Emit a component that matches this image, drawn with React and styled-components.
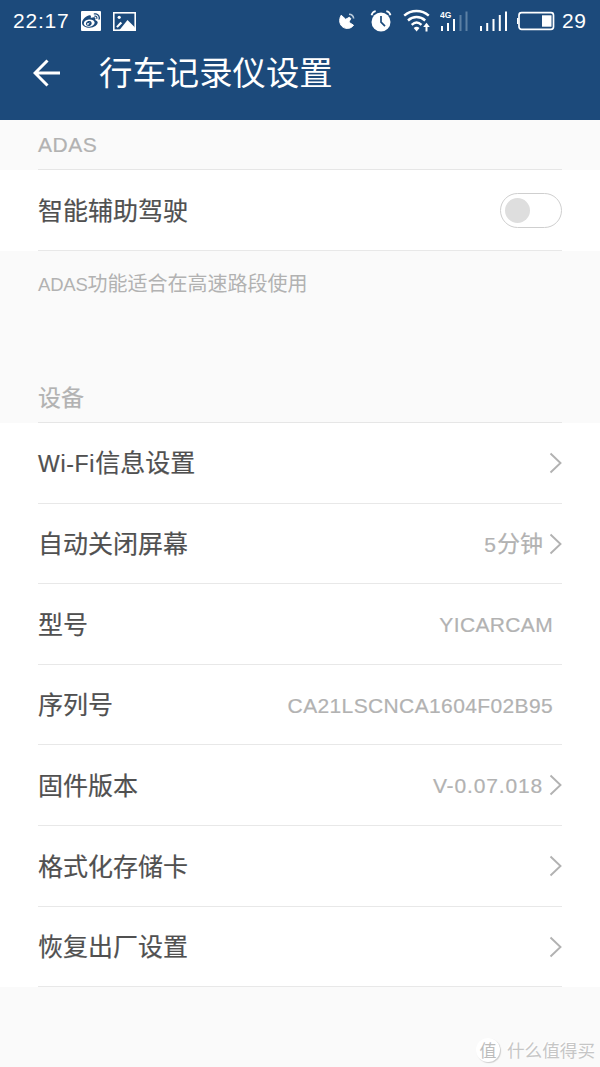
import React from 'react';
import styled, { createGlobalStyle } from 'styled-components'
import { FaWeibo } from 'react-icons/fa'

const rows = [
  { label: '信息设置', prefix: 'Wi-Fi', height: 81, arrow: true },
  { label: '自动关闭屏幕', number: '5', unit: '分钟', height: 80, arrow: true },
  { label: '型号', code: 'YICARCAM', spacing: 0.35, height: 81 },
  { label: '序列号', code: 'CA21LSCNCA1604F02B95', spacing: 0.37, height: 80 },
  { label: '固件版本', code: 'V-0.07.018', spacing: 0.85, height: 81, arrow: true },
  { label: '格式化存储卡', height: 81, arrow: true },
  { label: '恢复出厂设置', height: 80, arrow: true },
]

const StatusIcons = () => (
  <Tray>
    <svg width="20" height="20" viewBox="0 0 20 20" fill="none">
      <path d="M3.2 4.2C.6 8.500 1.500 14 5.200 16.300c3.300 2 8 1.400 10.300-2.100l-4.700-3 2-3.700-1.500-1.200-3.600 2z" fill="#fff" stroke="#fff" strokeWidth="1" strokeLinejoin="round" />
      <path d="M11 3.300c2.600.1 4.300 1.600 4.700 4.200" stroke="#b9cbdc" strokeWidth="1.600" />
    </svg>
    <svg width="22" height="22" viewBox="0 0 22 22" fill="none">
      <circle cx="11" cy="12" r="9.500" fill="#fff" />
      <path d="M1.500 5.200C2.100 3 3.500 1.600 5.700 1.200M16.300 1.200c2.200.4 3.600 1.800 4.200 4" stroke="#fff" strokeWidth="1.800" />
      <path d="M11 6v6.200l4 4" stroke="#1c4a7b" strokeWidth="1.700" />
    </svg>
    <svg width="28" height="24" viewBox="0 0 28 24" fill="none" stroke="#fff">
      <path d="M1.200 6.700c7-6.300 17.600-6.300 24.600 0M5 11.500c5-4.600 12.200-4.600 17.200 0M8.700 15.800c3.100-2.800 6.700-2.800 9.800 0" strokeWidth="2.400" />
      <path d="M10.700 19c1.800-1.700 4-1.700 5.800 0l-2.900 3.500z" fill="#fff" stroke="none" />
      <path d="M23.500 22.500v-6" strokeWidth="2" />
      <path d="M20.200 18l3.300-4.200 3.300 4.200z" fill="#fff" stroke="none" />
    </svg>
    <svg width="30" height="24" viewBox="0 0 30 24">
      <text x="0" y="8.500" fill="#fff" fontFamily="Liberation Sans" fontWeight="bold" fontSize="8.500">4G</text>
      <path d="M1 22v-5h2v5zM7 22v-8h2v8zM13 22V10h2v12z" fill="#fff" />
      <path d="M19.500 22V6h2v16zM25.500 22V2.500h2V22z" fill="#5c80a4" />
    </svg>
    <svg width="28" height="24" viewBox="0 0 28 24">
      <path d="M0 22v-5h2v5zM6.200 22v-8h2v8zM12.500 22V10h2v12zM18.800 22V6h2v16zM25 22V2.500h2V22z" fill="#fff" />
    </svg>
    <svg width="38" height="20" viewBox="0 0 38 20" fill="none">
      <rect x="2" y="1.700" width="34.500" height="16.600" rx="2.500" stroke="#fff" strokeWidth="1.700" />
      <rect x="25" y="4.300" width="9.500" height="11.400" fill="#fff" />
      <path d="M.7 7v6" stroke="#fff" strokeWidth="1.400" />
    </svg>
  </Tray>
)

const Picture = () => (
  <svg width="23" height="19" viewBox="0 0 23 19">
    <rect x=".8" y=".8" width="21.400" height="17.400" fill="none" stroke="#fff" strokeWidth="1.600" />
    <circle cx="6.200" cy="5.300" r="1.600" fill="#fff" />
    <path d="M3.200 14.500l4.300-4.800 1.700 1.500-4.500 4.600z" fill="#fff" />
    <path d="M6.500 18l8-10 7.500 7.500V18z" fill="#fff" />
  </svg>
)

const Arrow = () => (
  <Chevron width="14" height="22" viewBox="0 0 14 22">
    <path d="M2.500 1.500l10 9.500-10 9.500" fill="none" stroke="#b2b2b2" strokeWidth="1.900" />
  </Chevron>
)

const App = () => {
  return (
    <Page>
      <GlobalStyle />
      <Header>
        <StatusBar>
          <Time>22:17</Time>
          <Weibo><FaWeibo size={18} /></Weibo>
          <Picture />
          <StatusIcons />
          <Battery>29</Battery>
        </StatusBar>
        <TitleBar>
          <svg width="28" height="28" viewBox="0 0 28 28" fill="none" stroke="#fff" strokeWidth="3">
            <path d="M14.500 1.500L2 14l12.500 12.500M2 14h25" />
          </svg>
          <Title>行车记录仪设置</Title>
        </TitleBar>
      </Header>

      <SectionTitle $height={50}><Latin $size={21} $spacing={0.5}>ADAS</Latin></SectionTitle>
      <List>
        <Row $height={81}>
          <Label>智能辅助驾驶</Label>
          <Switch><Knob /></Switch>
        </Row>
      </List>
      <Hint><Latin $size={18.5} $spacing={-0.2}>ADAS</Latin>功能适合在高速路段使用</Hint>

      <SectionTitle $height={51} $lift={3}>设备</SectionTitle>
      <List>
        {rows.map((row) => (
          <Row key={row.label} $height={row.height}>
            <Label $lift={row.prefix ? 1 : 3}>
              {row.prefix && <Latin $size={23} $spacing={0.7}>{row.prefix}</Latin>}
              {row.label}
            </Label>
            <Value $plain={!row.arrow}>
              {row.code && <Latin $size={21} $spacing={row.spacing}>{row.code}</Latin>}
              {row.number && <Latin $size={21} $spacing={1}>{row.number}</Latin>}
              {row.unit}
            </Value>
            {row.arrow && <Arrow />}
          </Row>
        ))}
      </List>
      <Footer>
        <Mark>值</Mark>
        <Brand>什么值得买</Brand>
      </Footer>
    </Page>
  );
};

const GlobalStyle = createGlobalStyle`
body{
  margin:0;
}
*{
  box-sizing:border-box;
}
`

const Page = styled.div`
display:flex;
flex-direction:column;
width:600px;
height:1067px;
overflow:hidden;
background-color:#fafafa;
font-family:"Noto Sans CJK SC", sans-serif;
`

const Header = styled.div`
height:120px;
background-color:#1c4a7b;
color:#fff;
`

const StatusBar = styled.div`
display:flex;
align-items:center;
height:42px;
padding-left:13px;
`

const Time = styled.div`
width:68px;
font-family:"Liberation Sans", sans-serif;
font-size:21px;
letter-spacing:0.8px;
`

const Weibo = styled.div`
display:flex;
align-items:center;
justify-content:center;
width:20px;
height:20px;
margin-right:12px;
border-radius:1px;
background-color:#fff;
color:#1c4a7b;
`

const Tray = styled.div`
display:flex;
align-items:center;
gap:10px;
margin-left:202px;

svg{
  flex:none;
}

svg:nth-child(2){
  margin-left:2px;
}

svg:nth-child(3){
  margin-left:1px;
}

svg:nth-child(4){
  margin-left:-1px;
}

svg:nth-child(6){
  margin-left:-1px;
}
`

const Battery = styled.div`
margin-left:7px;
font-family:"Liberation Sans", sans-serif;
font-size:21px;
letter-spacing:0.5px;
`

const TitleBar = styled.div`
display:flex;
align-items:center;
height:62px;
padding-left:33px;
`

const Title = styled.div`
margin-left:38px;
padding-bottom:5px;
font-size:33.4px;
line-height:50px;
`

const SectionTitle = styled.div`
display:flex;
align-items:center;
height:${(props) => props.$height}px;
margin:0 38px;
padding-bottom:${(props) => props.$lift || 0}px;
border-bottom:1px solid #e6e6e6;
color:#b2b2b2;
font-size:23px;
-webkit-text-stroke:0.2px #b2b2b2;
`

const List = styled.div`
padding:0 38px;
background-color:#fff;
`

const Row = styled.div`
display:flex;
align-items:center;
height:${(props) => props.$height}px;
border-bottom:1px solid #e8e8e8;
`

const Label = styled.div`
flex:1;
padding-bottom:${(props) => props.$lift ?? 3}px;
color:#505050;
font-size:25px;
line-height:36px;
white-space:nowrap;
-webkit-text-stroke:0.2px #505050;
`

const Latin = styled.span`
font-family:"Liberation Sans", sans-serif;
font-size:${(props) => props.$size}px;
letter-spacing:${(props) => props.$spacing}px;
`

const Value = styled.div`
margin-right:${(props) => (props.$plain ? 9 : 5)}px;
padding-bottom:1px;
color:#b2b2b2;
font-size:23px;
line-height:34px;
white-space:nowrap;
-webkit-text-stroke:0.2px #b2b2b2;
`

const Chevron = styled.svg`
flex:none;
`

const Switch = styled.div`
display:flex;
align-items:center;
width:62px;
height:35px;
padding-left:4px;
border:1px solid #cfcfcf;
border-radius:18px;
`

const Knob = styled.div`
width:25px;
height:25px;
border-radius:50%;
background-color:#dedede;
`

const Hint = styled.div`
height:121px;
padding:16px 38px 0;
color:#b2b2b2;
font-size:20px;
line-height:32px;
`

const Footer = styled.div`
display:flex;
flex:1;
align-items:flex-end;
justify-content:flex-end;
padding:0 5px 5px 0;
color:#c6c6c6;
`

const Mark = styled.div`
display:flex;
align-items:center;
justify-content:center;
width:24px;
height:24px;
margin-right:7px;
border-radius:50%;
background-color:#fff;
box-shadow:1px 1px 1px #ccc;
color:#bcbcbc;
font-size:17px;
line-height:24px;
`

const Brand = styled.div`
font-size:17.6px;
line-height:24px;
text-shadow:-1px -1px 0 #fff;
`

export default App;
